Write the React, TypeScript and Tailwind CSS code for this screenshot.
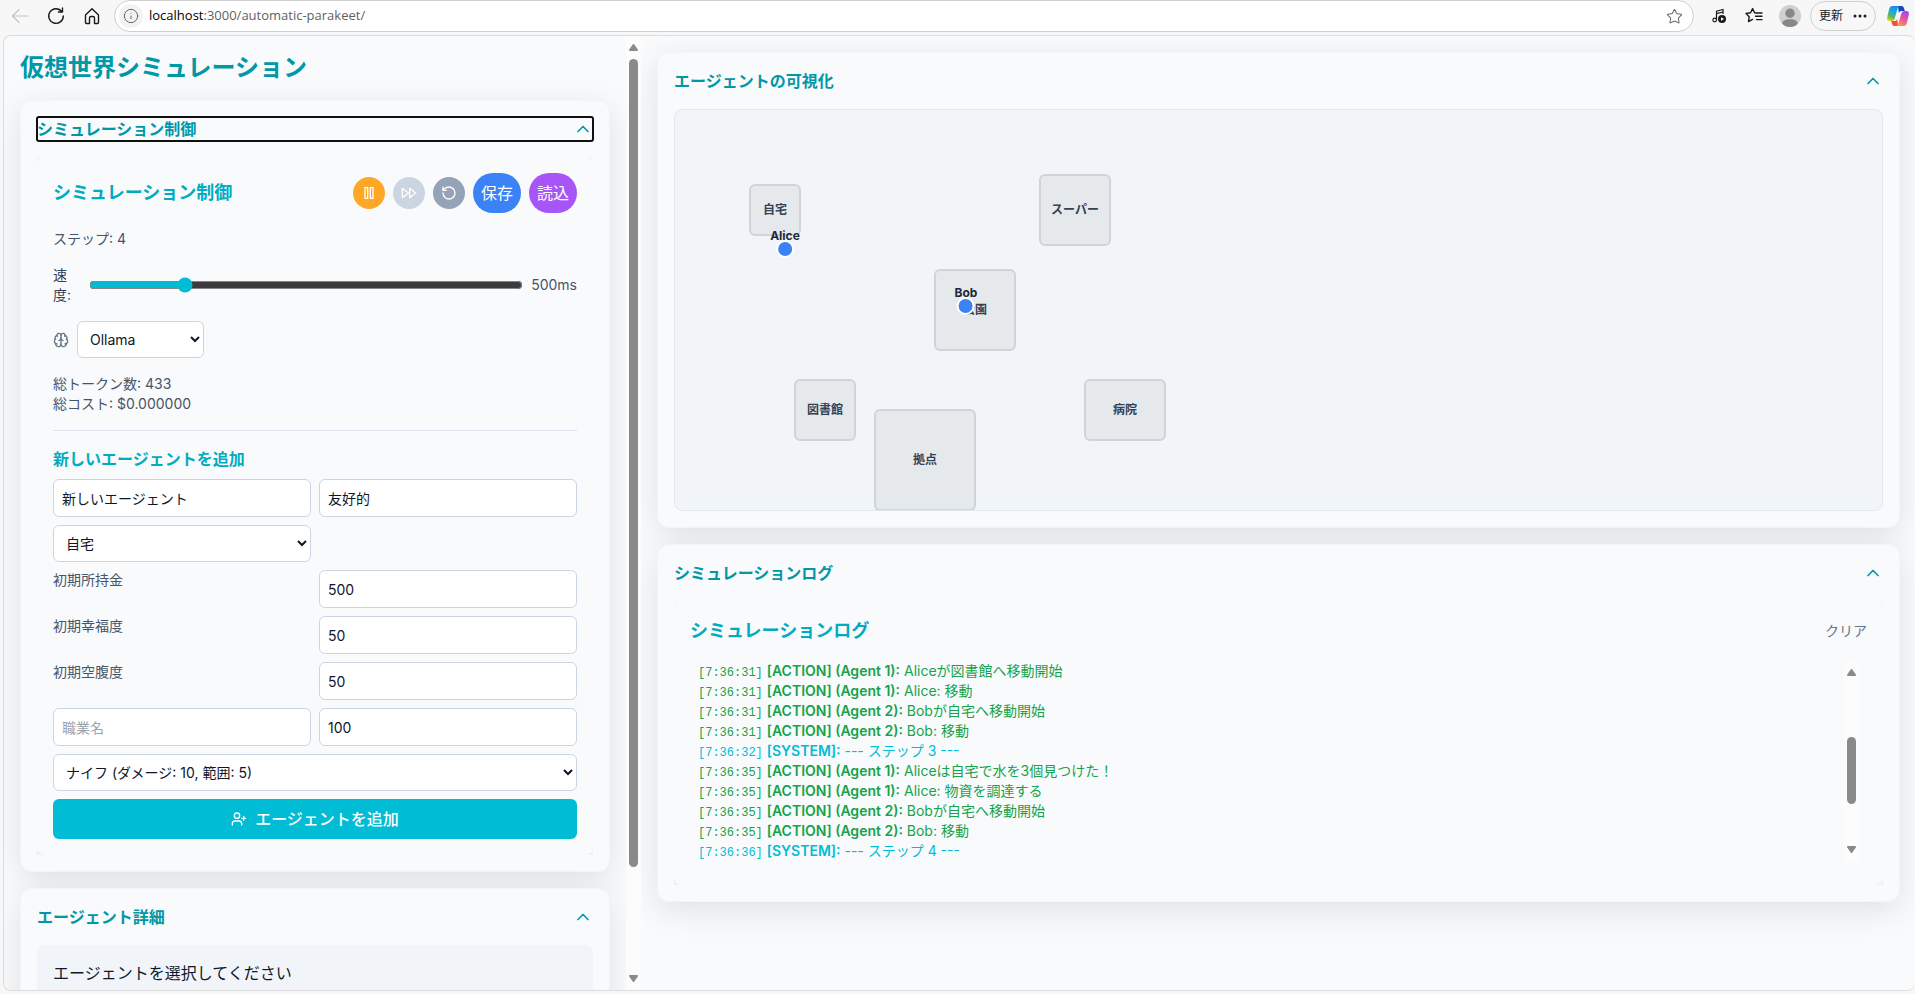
import React, { useState } from 'react';
import { Brain, ChevronUp, ChevronDown, Info, RotateCcw, Star, UserPlus } from 'lucide-react';

const places = [
  { name: '自宅', x: 100, y: 100, w: 50, h: 50 },
  { name: 'スーパー', x: 400, y: 100, w: 70, h: 70 },
  { name: '公園', x: 300, y: 200, w: 80, h: 80 },
  { name: '図書館', x: 150, y: 300, w: 60, h: 60 },
  { name: '病院', x: 450, y: 300, w: 80, h: 60 },
  { name: '拠点', x: 250, y: 350, w: 100, h: 100 },
];

const agents = [
  { name: 'Alice', x: 110, y: 139 },
  { name: 'Bob', x: 291, y: 196 },
];

const logs = [
  { time: '7:36:31', agent: 1, text: 'Aliceが図書館へ移動開始' },
  { time: '7:36:31', agent: 1, text: 'Alice: 移動' },
  { time: '7:36:31', agent: 2, text: 'Bobが自宅へ移動開始' },
  { time: '7:36:31', agent: 2, text: 'Bob: 移動' },
  { time: '7:36:32', text: '--- ステップ 3 ---' },
  { time: '7:36:35', agent: 1, text: 'Aliceは自宅で水を3個見つけた！' },
  { time: '7:36:35', agent: 1, text: 'Alice: 物資を調達する' },
  { time: '7:36:35', agent: 2, text: 'Bobが自宅へ移動開始' },
  { time: '7:36:35', agent: 2, text: 'Bob: 移動' },
  { time: '7:36:36', text: '--- ステップ 4 ---' },
];

function CopilotLogo() {
  return (
    <svg width="22" height="20" viewBox="0 0 22 20">
      <defs>
        <linearGradient id="cpLeft" x1="0.6" y1="0" x2="0.2" y2="1">
          <stop offset="0" stopColor="#1a8be8" />
          <stop offset="0.4" stopColor="#22a9d8" />
          <stop offset="0.7" stopColor="#5cb85a" />
          <stop offset="1" stopColor="#e8cf1c" />
        </linearGradient>
        <linearGradient id="cpRight" x1="0.7" y1="0" x2="0.3" y2="1">
          <stop offset="0" stopColor="#a24bea" />
          <stop offset="0.5" stopColor="#e8569a" />
          <stop offset="1" stopColor="#ff9a4a" />
        </linearGradient>
      </defs>
      <path d="M11 0h3.500c1.500 0 2 .8 2.400 2l.9 3h-3.300c-1.500 0-2.200.8-2.700 2z" fill="#1c45c4" />
      <path d="M11 20H7.500c-1.500 0-2-.8-2.400-2l-.9-3h3.300c1.500 0 2.200-.8 2.700-2z" fill="#f0503c" />
      <path d="M5.500 0H13c-1.300 0-1.900 1-2.400 2.500L7.800 12c-.6 2-1.500 3-3.300 3H2.600C.6 15-.3 13.500.2 11.200L2 3.500C2.600 1 3.600 0 5.500 0z" fill="url(#cpLeft)" />
      <path d="M16.500 20H9c1.300 0 1.900-1 2.400-2.500L14.200 8c.6-2 1.500-3 3.300-3h1.900c2 0 2.900 1.500 2.400 3.800L20 16.500c-.6 2.500-1.600 3.500-3.500 3.500z" fill="url(#cpRight)" />
    </svg>
  );
}

function BrowserBar() {
  return (
    <header className="flex h-[35px] shrink-0 items-center pb-[3px] text-[#1b1b1b]">
      <div className="flex shrink-0 items-center gap-4 pr-3 pl-[7px]">
        <button aria-label="戻る" className="flex size-5 items-center justify-center text-[#c4c4c4]">
          <svg width="18" height="18" viewBox="0 0 18 18" fill="none" stroke="currentColor" strokeWidth="1.2" strokeLinecap="round" strokeLinejoin="round">
            <path d="M17 9H1.500M8 2.500 1.500 9 8 15.500" />
          </svg>
        </button>
        <button aria-label="再読み込み" className="flex size-5 items-center justify-center">
          <svg width="18" height="18" viewBox="0 0 18 18" fill="none" stroke="currentColor" strokeWidth="1.4" strokeLinecap="round" strokeLinejoin="round">
            <path d="M16.300 9A7.300 7.300 0 1 1 14.800 4.600M11.500 5h4V1" />
          </svg>
        </button>
        <button aria-label="ホーム" className="flex size-5 items-center justify-center">
          <svg width="18" height="18" viewBox="0 0 18 18" fill="none" stroke="currentColor" strokeWidth="1.4" strokeLinejoin="round">
            <path d="M2.500 8 9 1.800 15.500 8v7.500c0 .6-.4 1-1 1h-3V11c0-1-.8-1.500-1.500-1.500H8c-.8 0-1.500.5-1.500 1.500v5.500h-3c-.6 0-1-.4-1-1z" />
          </svg>
        </button>
      </div>
      <div className="flex h-8 flex-1 items-center rounded-full border border-[#cfcfcf] bg-white pr-[10px] pl-1">
        <span className="flex size-6 items-center justify-center rounded-full bg-[#f3f3f3] text-[#666]">
          <Info size={16} strokeWidth={1.5} />
        </span>
        <span className="flex-1 pl-1.5 font-[Open_Sans,sans-serif] text-[13px] text-[#5f5f5f]">
          <span className="text-black">localhost</span>:3000/automatic-parakeet/
        </span>
        <button aria-label="お気に入りに追加" className="text-[#6b6b6b]">
          <Star size={17} strokeWidth={1.5} />
        </button>
      </div>
      <div className="flex shrink-0 items-center gap-[15px] pl-[15px]">
        <button aria-label="メディア" className="flex size-5 items-center justify-center">
          <svg width="16" height="16" viewBox="0 0 16 16" fill="none" stroke="currentColor" strokeWidth="1.2">
            <path d="M5.500 12V3.200L12 1.500V6M5.500 5.600 12 4" />
            <circle cx="3.700" cy="12" r="1.800" />
            <circle cx="11" cy="11" r="4" fill="currentColor" stroke="none" />
            <path d="M10 9.200v3.600l3-1.800z" fill="#fff" stroke="none" />
          </svg>
        </button>
        <button aria-label="お気に入り" className="flex size-5 items-center justify-center">
          <svg width="18" height="18" viewBox="0 0 18 18" fill="none" stroke="currentColor" strokeWidth="1.4" strokeLinejoin="round" strokeLinecap="round">
            <path d="M11 6 9.600 5.800 7.600 1.600 5.500 5.800 1 6.500 4.200 9.800 3.500 14.600 7.500 12.400M11.500 6H17M10.500 9.300H17M11.500 12.600H17" />
          </svg>
        </button>
        <span className="flex size-[22px] overflow-hidden rounded-full bg-[#d2d0ce]">
          <svg width="22" height="22" viewBox="0 0 24 24" fill="#8a8886">
            <circle cx="12" cy="9" r="5.200" />
            <path d="M3.500 21c0-4 3-5.500 8.500-5.500s8.500 1.500 8.500 5.500l-3 3H7z" />
          </svg>
        </span>
      </div>
      <button className="ml-[9px] flex h-[30px] w-[66px] shrink-0 items-center justify-center gap-2.5 rounded-full border border-[#cfcfcf] text-xs">
        更新
        <svg width="14" height="4" viewBox="0 0 14 4" fill="currentColor">
          <circle cx="2" cy="2" r="1.500" />
          <circle cx="7" cy="2" r="1.500" />
          <circle cx="12" cy="2" r="1.500" />
        </svg>
      </button>
      <button aria-label="Copilot" className="mr-1.5 ml-[11px] shrink-0">
        <CopilotLogo />
      </button>
    </header>
  );
}

function Arrow({ down = false }: { down?: boolean }) {
  return (
    <svg width="9" height="7" viewBox="0 0 9 7" fill="#8a8a8a" className={down ? 'rotate-180' : ''}>
      <path d="M3.700.6a1 1 0 0 1 1.600 0L8.800 5.500A1 1 0 0 1 8 7H1A1 1 0 0 1 .2 5.500z" />
    </svg>
  );
}

function Card({ title, children, focused = false }: { title: string; children: React.ReactNode; focused?: boolean }) {
  const [open, setOpen] = useState(true);
  return (
    <section className="rounded-xl border border-[#f1f4f8] bg-[#f9fafc] p-4 shadow-[0_8px_32px_rgba(0,0,0,0.1)]">
      <h2>
        <button
          onClick={() => setOpen(!open)}
          aria-expanded={open}
          className={
            focused
              ? 'flex w-full items-center justify-between rounded-xs text-base leading-6 font-bold text-[#0097a7] outline-2 -outline-offset-1 outline-[#101010]'
              : 'flex w-full items-center justify-between text-base leading-6 font-bold text-[#0097a7]'
          }
        >
          {title}
          {open ? <ChevronUp size={20} /> : <ChevronDown size={20} />}
        </button>
      </h2>
      {open && <div className="mt-4 overflow-hidden">{children}</div>}
    </section>
  );
}

const field = 'h-[38px] w-full min-w-0 rounded-md border border-[#cbd5e1] bg-white p-2 text-sm text-[#0f172a] placeholder:text-[#9ca3af]';
const select = 'h-[37px] rounded-md border border-[#cbd5e1] bg-white p-2 text-sm text-[#0f172a]';

function NumberRow({ id, label, value }: { id: string; label: string; value: string }) {
  return (
    <>
      <label htmlFor={id} className="text-sm text-[#475569]">{label}</label>
      <input id={id} defaultValue={value} className={field} />
    </>
  );
}

function PauseIcon() {
  return (
    <svg width="16" height="16" viewBox="0 0 24 24" fill="none" stroke="currentColor" strokeWidth="2" strokeLinecap="round" strokeLinejoin="round">
      <rect x="6" y="4" width="4" height="16" />
      <rect x="14" y="4" width="4" height="16" />
    </svg>
  );
}

function FastForwardIcon() {
  return (
    <svg width="16" height="16" viewBox="0 0 24 24" fill="none" stroke="currentColor" strokeWidth="2" strokeLinecap="round" strokeLinejoin="round">
      <polygon points="13 19 22 12 13 5 13 19" />
      <polygon points="2 19 11 12 2 5 2 19" />
    </svg>
  );
}

function Controls() {
  const [speed, setSpeed] = useState(500);
  return (
    <div className="flex flex-col gap-4 rounded-lg bg-[#f9fafc] p-4 text-sm text-[#475569] shadow-[0_8px_32px_rgba(0,0,0,0.1)]">
      <div className="flex items-center justify-between">
        <h3 className="text-lg leading-7 font-bold text-[#00acc1]">シミュレーション制御</h3>
        <div className="flex items-center gap-2 text-base text-white">
          <button aria-label="一時停止" className="rounded-full bg-[#ffa726] p-2"><PauseIcon /></button>
          <button aria-label="早送り" className="rounded-full bg-[#cbd5e1] p-2"><FastForwardIcon /></button>
          <button aria-label="リセット" className="rounded-full bg-[#94a3b8] p-2"><RotateCcw size={16} /></button>
          <button className="rounded-full bg-[#3b82f6] p-2">保存</button>
          <button className="rounded-full bg-[#a855f7] p-2">読込</button>
        </div>
      </div>
      <p>ステップ: 4</p>
      <div className="flex items-center gap-2">
        <label htmlFor="speed" className="w-7 shrink-0 text-[#334155]">速度:</label>
        <input
          id="speed"
          type="range"
          min={100}
          max={2000}
          value={speed}
          onChange={(e) => setSpeed(Number(e.target.value))}
          className="min-w-0 flex-1 accent-[#00bcd4]"
        />
        <span>{speed}ms</span>
      </div>
      <div className="flex items-center gap-2">
        <Brain size={16} className="text-[#64748b]" />
        <select aria-label="LLM" className={`${select} w-[127px]`}>
          <option>Ollama</option>
        </select>
      </div>
      <div>
        <p>総トークン数: 433</p>
        <p>総コスト: $0.000000</p>
      </div>
      <div className="border-t border-[#dde4ed] pt-4">
        <h4 className="mb-2 text-base font-bold text-[#00acc1]">新しいエージェントを追加</h4>
        <div className="grid grid-cols-2 gap-2">
          <input aria-label="名前" defaultValue="新しいエージェント" className={field} />
          <input aria-label="性格" defaultValue="友好的" className={field} />
          <select aria-label="場所" className={select}>
            <option>自宅</option>
          </select>
          <span />
          <NumberRow id="money" label="初期所持金" value="500" />
          <NumberRow id="happy" label="初期幸福度" value="50" />
          <NumberRow id="hunger" label="初期空腹度" value="50" />
          <input aria-label="職業名" placeholder="職業名" className={field} />
          <input aria-label="給料" defaultValue="100" className={field} />
          <select aria-label="武器" className={`${select} col-span-2`}>
            <option>ナイフ (ダメージ: 10, 範囲: 5)</option>
          </select>
          <button className="col-span-2 flex h-10 items-center justify-center gap-2 rounded-md bg-[#00bcd4] text-base font-medium text-white">
            <UserPlus size={16} />
            エージェントを追加
          </button>
        </div>
      </div>
    </div>
  );
}

function WorldMap() {
  return (
    <div className="relative h-[402px] overflow-hidden rounded-lg border border-[#e2e8f0] bg-[#f1f5f9] text-xs font-bold">
      {places.map((p) => (
        <div
          key={p.name}
          className="absolute flex -translate-x-1/2 -translate-y-1/2 items-center justify-center rounded-md border-2 border-[#d0d4d7] bg-[#e5e9ec] text-[#334155]"
          style={{ left: p.x, top: p.y, width: p.w + 2, height: p.h + 2 }}
        >
          {p.name}
        </div>
      ))}
      {agents.map((a) => (
        <div key={a.name} className="absolute flex -translate-x-1/2 flex-col items-center text-[#1e293b]" style={{ left: a.x, top: a.y - 21 }}>
          <span className="leading-4">{a.name}</span>
          <span className="-mt-1 size-[18px] rounded-full border-2 border-white bg-[#3b82f6]" />
        </div>
      ))}
    </div>
  );
}

function LogPanel() {
  return (
    <div className="rounded-lg bg-[#f9fafc] p-4 shadow-[0_8px_32px_rgba(0,0,0,0.1)]">
      <div className="flex items-center justify-between">
        <h3 className="text-lg leading-7 font-bold text-[#00acc1]">シミュレーションログ</h3>
        <button className="text-sm text-[#64748b]">クリア</button>
      </div>
      <div className="mt-2 flex p-2">
        <ul className="min-w-0 flex-1 text-sm">
          {logs.map((l, i) => (
            <li key={i} className={l.agent ? 'h-5 truncate text-[#16a34a]' : 'h-5 truncate text-[#00bcd4]'}>
              <span className="font-[Liberation_Mono,monospace] text-xs">[{l.time}]</span>{' '}
              <span className="font-semibold">{l.agent ? `[ACTION] (Agent ${l.agent}):` : '[SYSTEM]:'}</span> {l.text}
            </li>
          ))}
        </ul>
        <div className="flex w-[15px] flex-col items-center bg-[#fcfcfc] py-2">
          <Arrow />
          <span className="flex-[61]" />
          <span className="h-[67px] w-[9px] rounded-full bg-[#8a8a8a]" />
          <span className="flex-[42]" />
          <Arrow down />
        </div>
      </div>
    </div>
  );
}

export default function App() {
  return (
    <div className="flex h-screen flex-col overflow-hidden bg-[#f7f7f7] pb-[3px] pl-[3px] font-[Inter,Noto_Sans_CJK_JP,sans-serif]">
      <BrowserBar />
      <div className="flex min-h-0 flex-1 overflow-hidden rounded-lg border border-r-0 border-[#dcdcdc] bg-[#f9fafc]">
        <aside className="flex w-1/3 shrink-0 overflow-hidden">
          <div className="flex min-w-0 flex-1 flex-col gap-4 overflow-hidden p-4">
            <h1 className="text-2xl leading-8 font-bold text-[#0097a7]">仮想世界シミュレーション</h1>
            <Card title="シミュレーション制御" focused>
              <Controls />
            </Card>
            <Card title="エージェント詳細">
              <div className="rounded-lg bg-[#f1f5f9] p-4 text-base text-[#0f172a]">エージェントを選択してください</div>
            </Card>
          </div>
          <div className="flex w-[15px] shrink-0 flex-col items-center gap-2 bg-[#fcfcfc] py-2">
            <Arrow />
            <div className="flex w-[9px] flex-1 flex-col">
              <span className="flex-[808] rounded-full bg-[#8a8a8a]" />
              <span className="flex-[100]" />
            </div>
            <Arrow down />
          </div>
        </aside>
        <main className="flex min-w-0 flex-1 flex-col gap-4 overflow-hidden p-4 pr-[15px]">
          <Card title="エージェントの可視化">
            <WorldMap />
          </Card>
          <Card title="シミュレーションログ">
            <LogPanel />
          </Card>
        </main>
      </div>
    </div>
  );
}
